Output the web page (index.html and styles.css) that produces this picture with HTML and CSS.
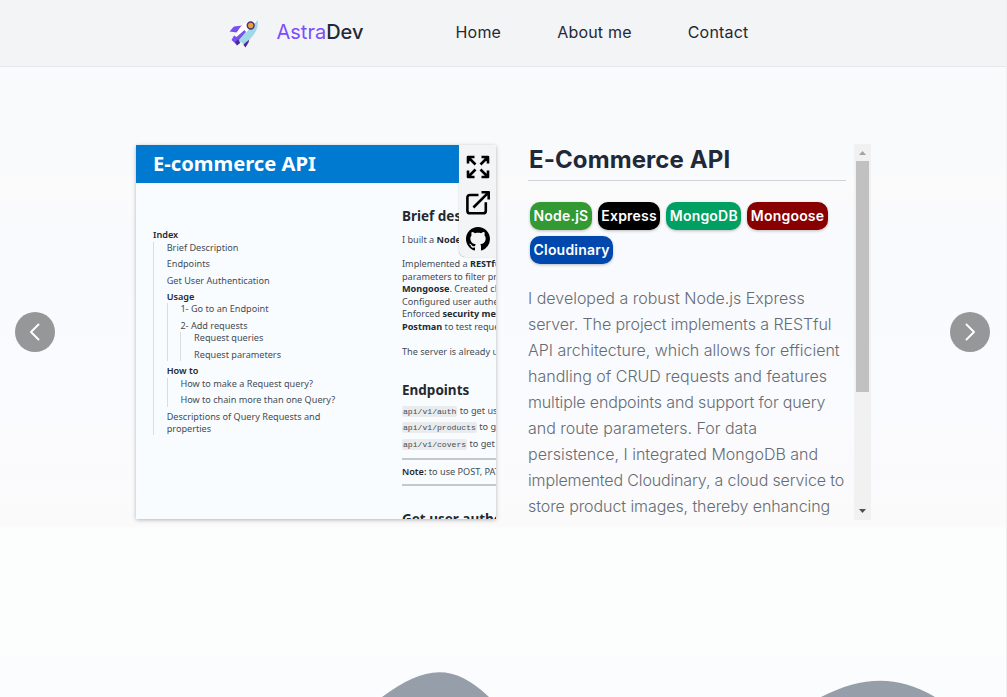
FILE: index.html
```html
<!DOCTYPE html>
<html lang="en">
<head>
<meta charset="utf-8">
<title>AstraDev</title>
<link rel="stylesheet" href="styles.css">
</head>
<body>
<header class="header">
  <a class="brand">
    <svg class="rocket" viewBox="0 0 30 30">
      <path d="M0.500 12.500 5 7.500 13.500 6.500 8 13.500Z" fill="#7751ef"/>
      <path d="M16.500 20 21 17 19.500 23.500 16.500 28.500 14.500 26Z" fill="#4a2b96"/>
      <path d="M29 1 19 3Q13 5 10 10L6 16 14 24 21 19Q27 14 28 8Z" fill="#fff"/>
      <path d="M29 1 28.500 8Q27 14 21 20L15 25 9 22 25 5Z" fill="#9fd9e9"/>
      <path d="M2.500 21 5 16.500 7.500 18 15.500 11 17 13 10 21 11 24 8 26Z" fill="#7751ef"/>
      <path d="M6 23 9 20.500 11 24 8 26.500Z" fill="#4a2b96"/>
      <circle cx="21.700" cy="6.500" r="3.400" fill="#e6a23d" stroke="#4a3273" stroke-width="1.500"/>
    </svg>
    <span class="brand-name"><span class="accent">Astra</span>Dev</span>
  </a>
  <nav class="nav"><a>Home</a><a>About me</a><a>Contact</a></nav>
</header>
<main class="stage">
  <button class="arrow" aria-label="Previous"><svg viewBox="0 0 40 40"><path d="M23.500 12.500 16 20l7.500 7.500"/></svg></button>
  <article class="project">
    <div class="preview">
      <div class="doc-title">E-commerce API</div>
      <div class="doc">
        <div class="index">
          <b>Index</b>
          <ul>
            <li>Brief Description</li>
            <li>Endpoints</li>
            <li>Get User Authentication</li>
            <li><b>Usage</b>
              <ul>
                <li>1- Go to an Endpoint</li>
                <li>2- Add requests
                  <ul><li>Request queries</li><li>Request parameters</li></ul>
                </li>
              </ul>
            </li>
            <li><b>How to</b>
              <ul><li>How to make a Request query?</li><li>How to chain more than one Query?</li></ul>
            </li>
            <li>Descriptions of Query Requests and<br>properties</li>
          </ul>
        </div>
        <div class="content">
          <h3>Brief description</h3>
          <p>I built a <b>Node.js</b></p>
          <p>Implemented a <b>RESTful</b><br>parameters to filter products<br><b>Mongoose</b>. Created cloud<br>Configured user authentication<br>Enforced <b>security measures</b><br><b>Postman</b> to test requests</p>
          <p>The server is already up</p>
          <h3 class="endpoints">Endpoints</h3>
          <div class="route"><code>api/v1/auth</code> to get user</div>
          <div class="route"><code>api/v1/products</code> to get</div>
          <div class="route"><code>api/v1/covers</code> to get</div>
          <div class="note"><b>Note:</b> to use POST, PATCH</div>
          <h3 class="auth">Get user authentication</h3>
        </div>
      </div>
      <div class="tools">
        <svg viewBox="0 0 24 24"><path class="line" d="M2 8.500V2h6.500M2.500 2.500l7 7M15.500 2H22v6.500M21.500 2.500l-7 7M2 15.500V22h6.500M2.500 21.500l7-7M22 15.500V22h-6.500M21.500 21.500l-7-7"/></svg>
        <svg viewBox="0 0 24 24"><path class="line" d="M12.500 4H4Q1.400 4 1.400 6.500v13.200Q1.400 22.300 4 22.300h13.200q2.600 0 2.600-2.600v-8.500M15.500 1.200h7.200v7.200M22.300 1.600 7.400 16.500"/></svg>
        <svg viewBox="0 0 16 16"><path d="M8 0C3.580 0 0 3.580 0 8c0 3.540 2.290 6.530 5.470 7.590.4.070.55-.17.55-.38 0-.19-.01-.82-.01-1.490-2.010.37-2.530-.49-2.690-.94-.09-.23-.48-.94-.82-1.130-.28-.15-.68-.52-.01-.53.63-.01 1.080.58 1.230.82.72 1.210 1.870.87 2.330.66.07-.52.28-.87.51-1.070-1.780-.2-3.640-.89-3.640-3.950 0-.87.31-1.590.82-2.150-.08-.2-.36-1.020.08-2.120 0 0 .67-.21 2.200.82.64-.18 1.320-.27 2-.27s1.360.09 2 .27c1.530-1.040 2.200-.82 2.200-.82.44 1.100.16 1.920.08 2.120.51.56.82 1.270.82 2.150 0 3.070-1.870 3.750-3.650 3.950.29.25.54.73.54 1.480 0 1.070-.01 1.930-.01 2.200 0 .21.15.46.55.38A8.010 8.010 0 0 0 16 8c0-4.420-3.580-8-8-8"/></svg>
      </div>
    </div>
    <section class="details">
      <div class="details-body">
        <h2>E-Commerce API</h2>
        <div class="tags"><span class="tag node">Node.jS</span><span class="tag express">Express</span><span class="tag mongo">MongoDB</span><span class="tag mongoose">Mongoose</span><span class="tag cloud">Cloudinary</span></div>
        <p>I developed a robust Node.js Express<br><span class="snug">server. The project implements a RESTful</span><br>API architecture, which allows for efficient<br>handling of CRUD requests and features<br><span class="tight">multiple endpoints and support for query</span><br>and route parameters. For data<br>persistence, I integrated MongoDB and<br><span class="tight">implemented Cloudinary, a cloud service to</span><br><span class="snug">store product images, thereby enhancing</span></p>
      </div>
      <div class="scrollbar">
        <svg viewBox="0 0 17 17"><path d="M5 11h7L8.500 7Z" fill="#a3a3a3"/></svg>
        <div class="thumb"></div>
        <svg viewBox="0 0 17 17"><path d="M5 6h7l-3.500 4Z" fill="#505050"/></svg>
      </div>
    </section>
  </article>
  <button class="arrow" aria-label="Next"><svg viewBox="0 0 40 40"><path d="M16.500 12.500 24 20l-7.500 7.500"/></svg></button>
</main>
<footer class="waves"><svg viewBox="0 0 1007 28"><path d="M382 28C423-2 452-8 489 28ZM821 28C863 7 897 6 935 28Z"/></svg></footer>
</body>
</html>
```
FILE: styles.css
```css
* { box-sizing: border-box; margin: 0; padding: 0; }
body {
  width: 1007px; height: 697px; overflow: hidden;
  display: flex; flex-direction: column;
  font-family: Inter, "Liberation Sans", sans-serif;
  letter-spacing: .2px; color: #1f2937;
  background: linear-gradient(#f9fafc 67px, #f9fafc 172px, #fbfbfb 178px, #f9fafd 230px, #fafbfe 420px, #fbfafb 526px, #fcfdfd 528px, #fcfdfd 655px, #fbfcfe 658px);
  border-right: 1px solid #eef0f2;
}
.header { height: 67px; flex: none; display: flex; padding: 0 0 2px 229px; align-items: center; background: #f3f4f6; border-bottom: 1px solid #e5e7eb; }
.brand { display: flex; align-items: center; width: 226.500px; }
.rocket { width: 30px; height: 30px; margin: 4px 17.500px 0 0; }
.brand-name { font-size: 20px; font-weight: 500; letter-spacing: 0; }
.accent { color: #7c4dff; font-weight: 400; }
.nav { display: flex; gap: 56px; font-size: 16px; }
.stage { height: 602px; flex: none; display: flex; align-items: flex-start; padding: 77px 16px 0 15px; }
.arrow { width: 40px; height: 40px; border: 0; border-radius: 50%; background: #969798; margin-top: 168px; flex: none; }
.arrow svg { display: block; width: 40px; height: 40px; fill: none; stroke: #fff; stroke-width: 1.900; stroke-linecap: round; stroke-linejoin: round; }
.project { display: flex; width: 735px; height: 376px; margin: 0 79px 0 81px; flex: none; }
.preview { position: relative; width: 360px; height: 374px; margin-top: 1px; overflow: hidden; background: #f9fcff; box-shadow: 0 1px 4px rgba(0,0,0,.28); font: 9.140px/12.430px "Noto Sans", "Open Sans", sans-serif; letter-spacing: 0; color: #444b54; flex: none; }
.preview b { color: #24292f; font-weight: 600; }
.doc-title { height: 38px; padding-left: 17px; background: #0079d0; color: #fff; font-size: 20.200px; line-height: 37px; font-weight: 700; }
.doc { display: flex; padding-left: 17px; white-space: nowrap; }
.index { width: 249px; padding-top: 46.300px; flex: none; }
.index b { display: block; }
.index ul { list-style: none; border-left: 1px solid #d9dde2; padding-left: 12.700px; }
.index li { margin-bottom: 4px; }
.index ul ul li:last-child, .index > ul > li:last-child { margin-bottom: 0; }
.content { padding-top: 22.600px; }
.content h3 { font-size: 13.500px; line-height: 20px; font-weight: 700; color: #24292f; margin-bottom: 8px; }
.content p { margin-bottom: 12.430px; }
.content p b { font-weight: 700; }
.content .endpoints { margin: 22.300px 0 2.800px; }
.route { height: 16.400px; line-height: 16.400px; }
.route code { font: 8.100px/11px "Liberation Mono", monospace; background: #e9ebec; border-radius: 2px; padding: 1px; }
.note { width: 110px; height: 28px; line-height: 24px; margin-top: 5.500px; border: solid #c6c7c8; border-width: 2px 0; }
.content .auth { margin-top: 23px; }
.tools { position: absolute; top: 0; right: 0; width: 37px; height: 112px; padding: 10px 0 0 7px; display: flex; flex-direction: column; gap: 12px; background: #f3f4f6; border-bottom-left-radius: 6px; box-shadow: 0 0 1px #777; }
.tools svg { width: 24px; height: 24px; flex: none; }
.tools .line { fill: none; stroke: #000; stroke-width: 2.600; stroke-linejoin: round; }
.details { display: flex; margin-left: 32px; width: 343px; }
.details-body { width: 326px; padding-right: 8px; overflow: hidden; flex: none; }
.details h2 { height: 37px; padding-left: 1px; font-size: 24px; font-weight: 700; line-height: 32px; letter-spacing: .1px; border-bottom: 1px solid #d1d5db; }
.tags { display: flex; flex-wrap: wrap; gap: 6px; padding: 21px 0 21px 2px; }
.tag { height: 28px; padding: 0 3.500px; border-radius: 10px; color: #fff; font-size: 14px; line-height: 28px; font-weight: 600; box-shadow: 0 1px 3px rgba(0,0,0,.25); }
.node { background: #339933; }
.express { background: #000; }
.mongo { background: #009f62; }
.mongoose { background: #880000; }
.cloud { background: #0048ae; }
.details p { font-size: 16px; line-height: 26px; color: #656c74; font-weight: 300; letter-spacing: 0; white-space: nowrap; }
.snug { letter-spacing: -.08px; }
.tight { letter-spacing: -.145px; }
.scrollbar { width: 17px; height: 376px; background: #f1f1f1; display: flex; flex-direction: column; flex: none; }
.scrollbar svg { width: 17px; height: 17px; flex: none; }
.scrollbar svg:last-child { margin-top: auto; }
.thumb { width: 13px; height: 231px; margin-left: 2px; background: #c1c1c1; }
.waves { height: 28px; flex: none; }
.waves svg { width: 1007px; height: 28px; display: block; fill: #969eaa; }
```
